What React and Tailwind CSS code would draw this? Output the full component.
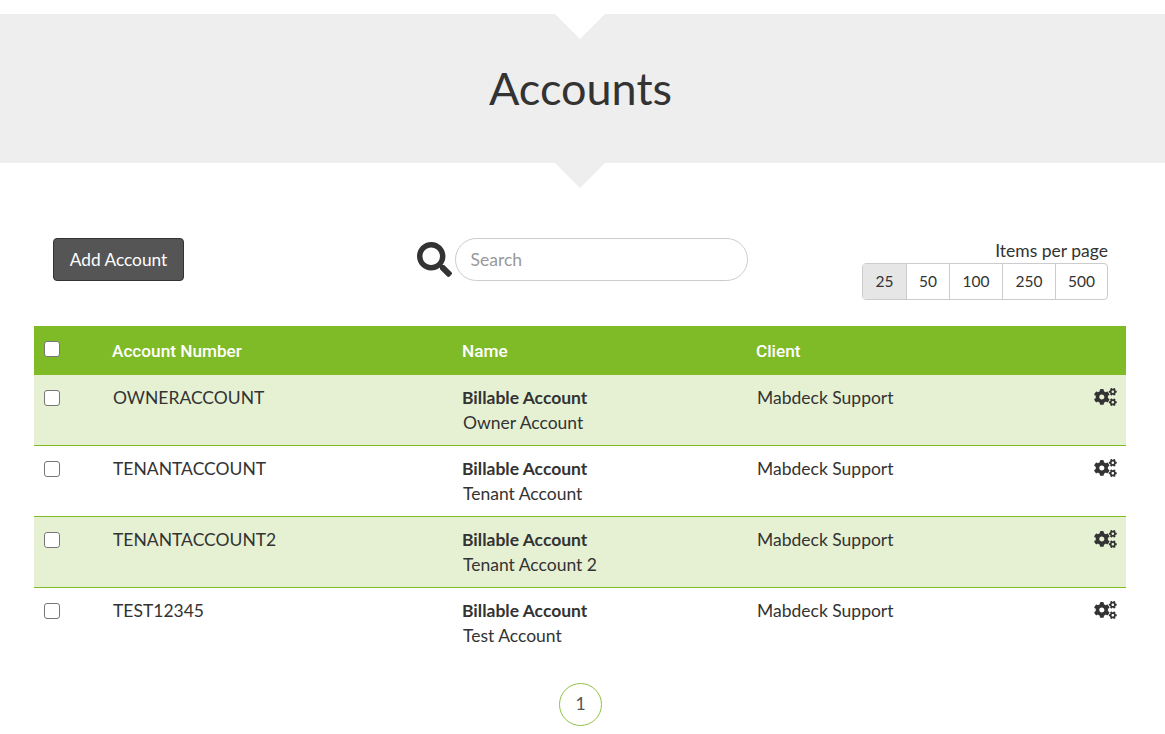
import React from 'react';
import { FaSearch, FaCogs } from 'react-icons/fa';

const accounts = [
  { number: 'OWNERACCOUNT', name: 'Owner Account' },
  { number: 'TENANTACCOUNT', name: 'Tenant Account' },
  { number: 'TENANTACCOUNT2', name: 'Tenant Account 2' },
  { number: 'TEST12345', name: 'Test Account' },
];

const pageSizes = ['25', '50', '100', '250', '500'];

const Checkbox = () => (
  <input
    type="checkbox"
    className="appearance-none block w-4 h-4 bg-white border border-[#767676] rounded-[3px]"
  />
);

const App = () => {
  return (
    <div className="min-h-[734px] bg-white pt-[14px] font-['Lato',sans-serif] text-[17.5px] text-[#333333]">
      <div className="relative h-[149px] bg-[#eeeeee] flex justify-center pt-[46px] pr-[4px]">
        <div className="absolute top-0 left-[555px] w-0 h-0 border-x-[25px] border-t-[25px] border-x-transparent border-t-white" />
        <h1 className="text-[45px] leading-[58px] font-normal -mt-px">Accounts</h1>
        <div className="absolute top-full left-[555px] w-0 h-0 border-x-[25px] border-t-[25px] border-x-transparent border-t-[#eeeeee]" />
      </div>

      <div className="flex items-start justify-between mt-[75px] pl-[53px] pr-[57px] h-[88px]">
        <button className="h-[43px] w-[131px] bg-[#555555] border border-[#333333] rounded text-white text-[17.3px]">
          Add Account
        </button>
        <div className="flex items-center ml-[118px] gap-[3px]">
          <FaSearch className="w-[35px] h-[35px] text-[#333333]" />
          <input
            type="text"
            placeholder="Search"
            className="h-[43px] w-[293px] border border-[#cccccc] rounded-full px-[15px] text-[17.5px] placeholder:text-[#999999] outline-none"
          />
        </div>
        <div className="flex flex-col items-end">
          <div className="text-[17.5px] leading-[25px]">Items per page</div>
          <div className="flex h-[37px] border border-[#cccccc] rounded text-[15.5px]">
            {pageSizes.map((size, i) => (
              <div
                key={size}
                className={
                  i === 0
                    ? 'w-[44px] flex items-center justify-center bg-[#e6e6e6] border-r border-[#cccccc]'
                    : i === 4
                    ? 'w-[51px] flex items-center justify-center'
                    : size === '50'
                    ? 'w-[43px] flex items-center justify-center border-r border-[#cccccc]'
                    : 'w-[53px] flex items-center justify-center border-r border-[#cccccc]'
                }
              >
                {size}
              </div>
            ))}
          </div>
        </div>
      </div>

      <div className="ml-[34px] mr-[39px]">
        <div className="flex h-[49px] pt-[2px] bg-[#7fba27] text-white font-['Roboto',sans-serif] font-medium text-[17.2px] items-center">
          <div className="w-[78px] pl-[10px] -mt-[6px]">
            <Checkbox />
          </div>
          <div className="w-[350px]">Account Number</div>
          <div className="w-[294px]">Name</div>
          <div>Client</div>
        </div>
        {accounts.map((account, i) => (
          <div
            key={account.number}
            className={
              i % 2 === 0
                ? 'flex h-[71px] pt-[10px] bg-[#e6f1d4] border-b border-[#7fba27] leading-[25px]'
                : i === 1
                ? 'flex h-[71px] pt-[10px] bg-white border-b border-[#7fba27] leading-[25px]'
                : 'flex h-[71px] pt-[10px] bg-white leading-[25px]'
            }
          >
            <div className="w-[78px] pl-[10px] pt-[5px]">
              <Checkbox />
            </div>
            <div className="w-[350px] pl-px">{account.number}</div>
            <div className="w-[294px] pl-px">
              <div className="font-bold -ml-px">Billable Account</div>
              <div>{account.name}</div>
            </div>
            <div className="flex-1 pl-px">Mabdeck Support</div>
            <FaCogs className="w-[23px] h-[18px] mr-[9px] mt-[3px] text-[#333333]" />
          </div>
        ))}
      </div>

      <div className="flex justify-center mt-[24px] pb-[8px] pr-[4px]">
        <div className="w-[43px] h-[43px] rounded-full border border-[#8fc245] flex items-center justify-center text-[17.5px] text-[#555555]">
          1
        </div>
      </div>
    </div>
  );
};

export default App;
